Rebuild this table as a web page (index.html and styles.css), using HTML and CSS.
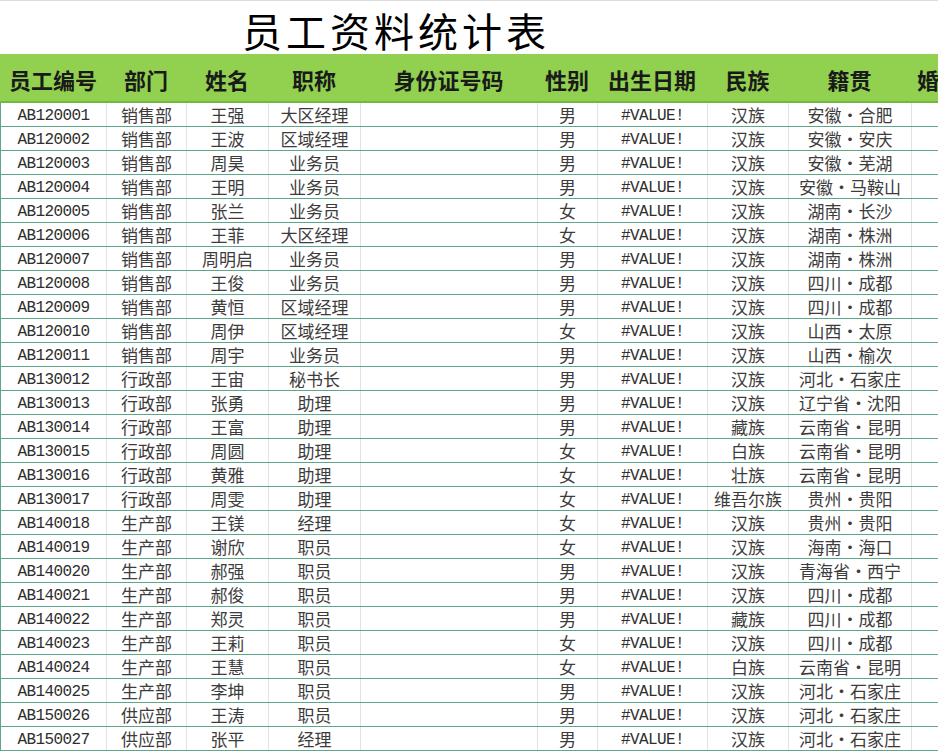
FILE: index.html
```html
<!DOCTYPE html>
<html lang="zh-CN">
<head>
<meta charset="utf-8">
<title>员工资料统计表</title>
<link rel="stylesheet" href="styles.css">
</head>
<body>
<div class="sheet">
  <div class="title-row"><div class="title-box"><div class="title">员工资料统计表</div></div></div>
  <div class="row head">
    <div class="c">员工编号</div><div class="c">部门</div><div class="c">姓名</div><div class="c">职称</div><div class="c">身份证号码</div><div class="c">性别</div><div class="c">出生日期</div><div class="c">民族</div><div class="c">籍贯</div><div class="c last">婚</div>
  </div>
  <div class="row"><div class="c m">AB120001</div><div class="c">销售部</div><div class="c">王强</div><div class="c">大区经理</div><div class="c"></div><div class="c">男</div><div class="c m">#VALUE!</div><div class="c">汉族</div><div class="c">安徽・合肥</div><div class="c last"></div></div>
  <div class="row"><div class="c m">AB120002</div><div class="c">销售部</div><div class="c">王波</div><div class="c">区域经理</div><div class="c"></div><div class="c">男</div><div class="c m">#VALUE!</div><div class="c">汉族</div><div class="c">安徽・安庆</div><div class="c last"></div></div>
  <div class="row"><div class="c m">AB120003</div><div class="c">销售部</div><div class="c">周昊</div><div class="c">业务员</div><div class="c"></div><div class="c">男</div><div class="c m">#VALUE!</div><div class="c">汉族</div><div class="c">安徽・芜湖</div><div class="c last"></div></div>
  <div class="row"><div class="c m">AB120004</div><div class="c">销售部</div><div class="c">王明</div><div class="c">业务员</div><div class="c"></div><div class="c">男</div><div class="c m">#VALUE!</div><div class="c">汉族</div><div class="c">安徽・马鞍山</div><div class="c last"></div></div>
  <div class="row"><div class="c m">AB120005</div><div class="c">销售部</div><div class="c">张兰</div><div class="c">业务员</div><div class="c"></div><div class="c">女</div><div class="c m">#VALUE!</div><div class="c">汉族</div><div class="c">湖南・长沙</div><div class="c last"></div></div>
  <div class="row"><div class="c m">AB120006</div><div class="c">销售部</div><div class="c">王菲</div><div class="c">大区经理</div><div class="c"></div><div class="c">女</div><div class="c m">#VALUE!</div><div class="c">汉族</div><div class="c">湖南・株洲</div><div class="c last"></div></div>
  <div class="row"><div class="c m">AB120007</div><div class="c">销售部</div><div class="c">周明启</div><div class="c">业务员</div><div class="c"></div><div class="c">男</div><div class="c m">#VALUE!</div><div class="c">汉族</div><div class="c">湖南・株洲</div><div class="c last"></div></div>
  <div class="row"><div class="c m">AB120008</div><div class="c">销售部</div><div class="c">王俊</div><div class="c">业务员</div><div class="c"></div><div class="c">男</div><div class="c m">#VALUE!</div><div class="c">汉族</div><div class="c">四川・成都</div><div class="c last"></div></div>
  <div class="row"><div class="c m">AB120009</div><div class="c">销售部</div><div class="c">黄恒</div><div class="c">区域经理</div><div class="c"></div><div class="c">男</div><div class="c m">#VALUE!</div><div class="c">汉族</div><div class="c">四川・成都</div><div class="c last"></div></div>
  <div class="row"><div class="c m">AB120010</div><div class="c">销售部</div><div class="c">周伊</div><div class="c">区域经理</div><div class="c"></div><div class="c">女</div><div class="c m">#VALUE!</div><div class="c">汉族</div><div class="c">山西・太原</div><div class="c last"></div></div>
  <div class="row"><div class="c m">AB120011</div><div class="c">销售部</div><div class="c">周宇</div><div class="c">业务员</div><div class="c"></div><div class="c">男</div><div class="c m">#VALUE!</div><div class="c">汉族</div><div class="c">山西・榆次</div><div class="c last"></div></div>
  <div class="row"><div class="c m">AB130012</div><div class="c">行政部</div><div class="c">王宙</div><div class="c">秘书长</div><div class="c"></div><div class="c">男</div><div class="c m">#VALUE!</div><div class="c">汉族</div><div class="c">河北・石家庄</div><div class="c last"></div></div>
  <div class="row"><div class="c m">AB130013</div><div class="c">行政部</div><div class="c">张勇</div><div class="c">助理</div><div class="c"></div><div class="c">男</div><div class="c m">#VALUE!</div><div class="c">汉族</div><div class="c">辽宁省・沈阳</div><div class="c last"></div></div>
  <div class="row"><div class="c m">AB130014</div><div class="c">行政部</div><div class="c">王富</div><div class="c">助理</div><div class="c"></div><div class="c">男</div><div class="c m">#VALUE!</div><div class="c">藏族</div><div class="c">云南省・昆明</div><div class="c last"></div></div>
  <div class="row"><div class="c m">AB130015</div><div class="c">行政部</div><div class="c">周圆</div><div class="c">助理</div><div class="c"></div><div class="c">女</div><div class="c m">#VALUE!</div><div class="c">白族</div><div class="c">云南省・昆明</div><div class="c last"></div></div>
  <div class="row"><div class="c m">AB130016</div><div class="c">行政部</div><div class="c">黄雅</div><div class="c">助理</div><div class="c"></div><div class="c">女</div><div class="c m">#VALUE!</div><div class="c">壮族</div><div class="c">云南省・昆明</div><div class="c last"></div></div>
  <div class="row"><div class="c m">AB130017</div><div class="c">行政部</div><div class="c">周雯</div><div class="c">助理</div><div class="c"></div><div class="c">女</div><div class="c m">#VALUE!</div><div class="c">维吾尔族</div><div class="c">贵州・贵阳</div><div class="c last"></div></div>
  <div class="row"><div class="c m">AB140018</div><div class="c">生产部</div><div class="c">王镁</div><div class="c">经理</div><div class="c"></div><div class="c">女</div><div class="c m">#VALUE!</div><div class="c">汉族</div><div class="c">贵州・贵阳</div><div class="c last"></div></div>
  <div class="row"><div class="c m">AB140019</div><div class="c">生产部</div><div class="c">谢欣</div><div class="c">职员</div><div class="c"></div><div class="c">女</div><div class="c m">#VALUE!</div><div class="c">汉族</div><div class="c">海南・海口</div><div class="c last"></div></div>
  <div class="row"><div class="c m">AB140020</div><div class="c">生产部</div><div class="c">郝强</div><div class="c">职员</div><div class="c"></div><div class="c">男</div><div class="c m">#VALUE!</div><div class="c">汉族</div><div class="c">青海省・西宁</div><div class="c last"></div></div>
  <div class="row"><div class="c m">AB140021</div><div class="c">生产部</div><div class="c">郝俊</div><div class="c">职员</div><div class="c"></div><div class="c">男</div><div class="c m">#VALUE!</div><div class="c">汉族</div><div class="c">四川・成都</div><div class="c last"></div></div>
  <div class="row"><div class="c m">AB140022</div><div class="c">生产部</div><div class="c">郑灵</div><div class="c">职员</div><div class="c"></div><div class="c">男</div><div class="c m">#VALUE!</div><div class="c">藏族</div><div class="c">四川・成都</div><div class="c last"></div></div>
  <div class="row"><div class="c m">AB140023</div><div class="c">生产部</div><div class="c">王莉</div><div class="c">职员</div><div class="c"></div><div class="c">女</div><div class="c m">#VALUE!</div><div class="c">汉族</div><div class="c">四川・成都</div><div class="c last"></div></div>
  <div class="row"><div class="c m">AB140024</div><div class="c">生产部</div><div class="c">王慧</div><div class="c">职员</div><div class="c"></div><div class="c">女</div><div class="c m">#VALUE!</div><div class="c">白族</div><div class="c">云南省・昆明</div><div class="c last"></div></div>
  <div class="row"><div class="c m">AB140025</div><div class="c">生产部</div><div class="c">李坤</div><div class="c">职员</div><div class="c"></div><div class="c">男</div><div class="c m">#VALUE!</div><div class="c">汉族</div><div class="c">河北・石家庄</div><div class="c last"></div></div>
  <div class="row"><div class="c m">AB150026</div><div class="c">供应部</div><div class="c">王涛</div><div class="c">职员</div><div class="c"></div><div class="c">男</div><div class="c m">#VALUE!</div><div class="c">汉族</div><div class="c">河北・石家庄</div><div class="c last"></div></div>
  <div class="row"><div class="c m">AB150027</div><div class="c">供应部</div><div class="c">张平</div><div class="c">经理</div><div class="c"></div><div class="c">男</div><div class="c m">#VALUE!</div><div class="c">汉族</div><div class="c">河北・石家庄</div><div class="c last"></div></div>
</div>
</body>
</html>
```
FILE: styles.css
```css
html, body {
  margin: 0;
  padding: 0;
  background: #ffffff;
  overflow: hidden;
}
.sheet {
  width: 1011px;
  font-family: "Noto Sans CJK SC", "Noto Sans", sans-serif;
}
.title-row {
  height: 54px;
  box-sizing: border-box;
  border-top: 1px solid #dcdcdc;
}
.title-box {
  width: 788px;
  height: 53px;
  box-sizing: border-box;
  padding-top: 6px;
  text-align: center;
}
.title {
  font-size: 40px;
  line-height: 47px;
  height: 47px;
  color: #000;
  letter-spacing: 4px;
  padding-left: 4px;
}
.row {
  display: grid;
  grid-template-columns: 106px 80px 82px 92px 177px 60px 110px 81px 123px 100px;
  height: 24px;
  box-sizing: border-box;
  border-bottom: 1px solid #5fa58a;
  border-left: 1px solid #5fa58a;
}
.c {
  box-sizing: border-box;
  border-right: 1px solid #e2e2e2;
  text-align: center;
  font-size: 17px;
  line-height: 23px;
  color: #3c3c3c;
  white-space: nowrap;
  overflow: hidden;
}
.c.m {
  font-family: "Liberation Mono", monospace;
  font-size: 16px;
  letter-spacing: -0.6px;
  line-height: 23px;
  padding-top: 2px;
  color: #2e2e2e;
}
.c.last {
  text-align: left;
}
.head {
  height: 49px;
  background: #92d050;
  border-left: none;
  border-bottom: 2px solid #72b843;
}
.head .c {
  border-right: none;
  font-size: 22px;
  font-weight: 700;
  line-height: 50px;
  color: #1a1a1a;
}
.head .c.last {
  padding-left: 6px;
}
```
